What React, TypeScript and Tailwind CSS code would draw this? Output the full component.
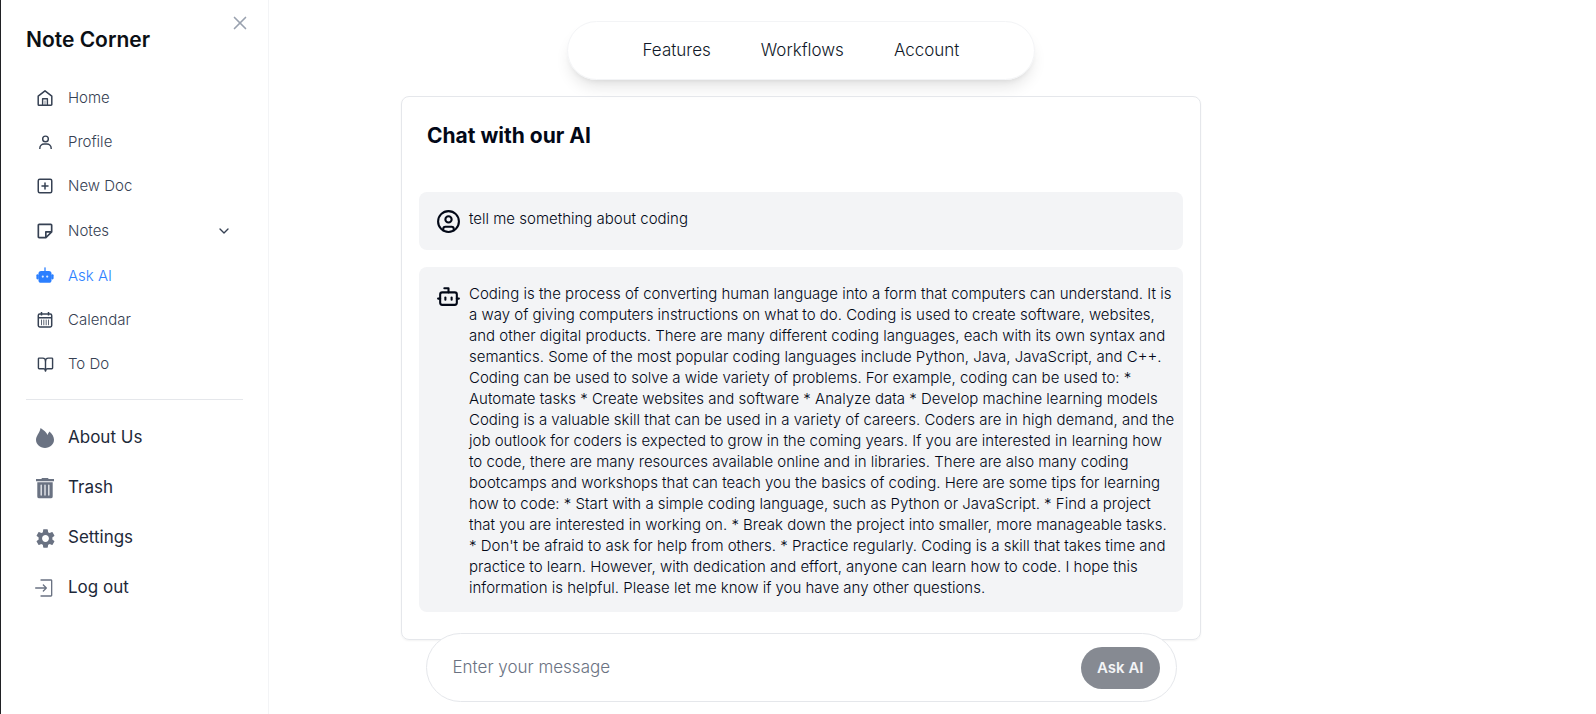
import type { ReactNode } from "react";
import { BiNote, BiUser } from "react-icons/bi";
import { LuBookOpen, LuBot, LuChevronDown, LuCircleUser, LuSquarePlus, LuX } from "react-icons/lu";
import { MdSettings } from "react-icons/md";
import { RxEnter } from "react-icons/rx";

function HomeIcon() {
  return (
    <svg viewBox="0 0 18 18" className="size-[18px]" fill="none" stroke="currentColor" strokeWidth="1.5" strokeLinejoin="round" aria-hidden="true">
      <path d="M2.2 7.2 9 1.8l6.8 5.4v8.2a.8.8 0 0 1-.8.8H3a.8.8 0 0 1-.8-.8z" />
      <path d="M6.6 16V9.8h4.8V16" strokeWidth="1.4" />
      <path d="M9 11.6V16" strokeWidth=".6" />
    </svg>
  );
}

function RobotIcon() {
  return (
    <svg viewBox="0 0 18 18" className="size-[18px]" aria-hidden="true">
      <path d="M9 .8v4" stroke="currentColor" strokeWidth="1.3" strokeLinecap="round" />
      <rect x="2.5" y="4" width="13" height="11.8" rx="2.6" fill="currentColor" />
      <rect x=".4" y="7.2" width="2.4" height="5.2" rx="1.1" fill="currentColor" />
      <rect x="15.2" y="7.2" width="2.4" height="5.2" rx="1.1" fill="currentColor" />
      <circle cx="6.8" cy="9.6" r="1.1" fill="#dbeafe" />
      <circle cx="11.2" cy="9.6" r="1.1" fill="#dbeafe" />
    </svg>
  );
}

function CalendarIcon() {
  return (
    <svg viewBox="0 0 18 18" className="size-[18px]" fill="none" stroke="currentColor" strokeWidth="1.5" aria-hidden="true">
      <rect x="2.3" y="3" width="13.4" height="13" rx="1.4" />
      <path d="M2.3 6.7h13.4M5.5 1v3.4M12.5 1v3.4" />
      <path d="M5.5 8.6v5.6M7.8 8.6v5.6M10.2 8.6v5.6M12.5 8.6v5.6" strokeWidth=".8" />
    </svg>
  );
}

function FlameIcon() {
  return (
    <svg viewBox="0 0 18 20" className="h-5 w-[18px]" fill="currentColor" aria-hidden="true">
      <path d="M4.6 0C8 2.2 10.2 4.4 11.6 6.9c.3-1.2.9-2.4 1.9-3.5C16.4 6 18 8.9 18 11.8 18 16.4 14 20 9 20s-9-3.6-9-8.2C0 7.900 3.600 5 4.600 0z" />
    </svg>
  );
}

function TrashIcon() {
  return (
    <svg viewBox="0 0 20 22" className="h-[22px] w-5" aria-hidden="true">
      <path d="M1 1.900h5.200l.9-1h5.800l.9 1H19v2.300H1zM2.300 5.200h15.400v14.200a1.900 1.900 0 0 1-1.900 1.900H4.200a1.900 1.900 0 0 1-1.900-1.900z" fill="currentColor" />
      <path d="M6.200 8.100v10M10 8.100v10M13.800 8.100v10" stroke="#e5e7eb" strokeWidth="1.4" strokeLinecap="round" />
    </svg>
  );
}

type Item = { label: string; icon: ReactNode; active?: boolean; expandable?: boolean };

const mainItems: Item[] = [
  { label: "Home", icon: <HomeIcon /> },
  { label: "Profile", icon: <BiUser size={17} /> },
  { label: "New Doc", icon: <LuSquarePlus size={18} /> },
  { label: "Notes", icon: <BiNote size={20} />, expandable: true },
  { label: "Ask AI", icon: <RobotIcon />, active: true },
  { label: "Calendar", icon: <CalendarIcon /> },
  { label: "To Do", icon: <LuBookOpen size={17} /> },
];

const moreItems: Item[] = [
  { label: "About Us", icon: <FlameIcon /> },
  { label: "Trash", icon: <TrashIcon /> },
  { label: "Settings", icon: <MdSettings size={23} className="shrink-0" /> },
  { label: "Log out", icon: <RxEnter size={20} /> },
];

const messages = [
  { from: "user", text: "tell me something about coding" },
  {
    from: "ai",
    text: "Coding is the process of converting human language into a form that computers can understand. It is a way of giving computers instructions on what to do. Coding is used to create software, websites, and other digital products. There are many different coding languages, each with its own syntax and semantics. Some of the most popular coding languages include Python, Java, JavaScript, and C++. Coding can be used to solve a wide variety of problems. For example, coding can be used to: * Automate tasks * Create websites and software * Analyze data * Develop machine learning models Coding is a valuable skill that can be used in a variety of careers. Coders are in high demand, and the job outlook for coders is expected to grow in the coming years. If you are interested in learning how to code, there are many resources available online and in libraries. There are also many coding bootcamps and workshops that can teach you the basics of coding. Here are some tips for learning how to code: * Start with a simple coding language, such as Python or JavaScript. * Find a project that you are interested in working on. * Break down the project into smaller, more manageable tasks. * Don't be afraid to ask for help from others. * Practice regularly. Coding is a skill that takes time and practice to learn. However, with dedication and effort, anyone can learn how to code. I hope this information is helpful. Please let me know if you have any other questions.",
  },
];

function Sidebar() {
  return (
    <aside className="flex w-[269px] shrink-0 flex-col border-l border-r border-l-[#202124] border-r-gray-100 pl-[25px] pr-[25px]">
      <div className="flex items-start justify-between">
        <h1 className="pt-[26px] text-[21px] font-semibold leading-7 text-[#0b0f14]">Note Corner</h1>
        <button type="button" aria-label="Close sidebar" className="-mr-2 mt-3 text-gray-400">
          <LuX size={22} strokeWidth={1.8} />
        </button>
      </div>
      <nav aria-label="Main" className="mt-[22px] border-b border-gray-200 pb-[13px]">
        <ul>
          {mainItems.map((item) => (
            <li key={item.label} className={item.expandable ? "py-px" : ""}>
              <a
                href="#"
                className={`flex h-11 items-center gap-[13px] pl-[9px] pr-[11px] text-[15px] font-light ${item.active ? "text-blue-500" : "text-gray-700"}`}
              >
                <span className="flex w-5 justify-center">{item.icon}</span>
                <span className="grow">{item.label}</span>
                {item.expandable && <LuChevronDown size={16} />}
              </a>
            </li>
          ))}
        </ul>
      </nav>
      <nav aria-label="More" className="pt-[13px]">
        <ul>
          {moreItems.map((item) => (
            <li key={item.label}>
              <a href="#" className="flex h-[50px] items-center gap-[13px] pl-[9px] text-[17px] text-gray-800">
                <span className="flex w-5 justify-center text-gray-500">{item.icon}</span>
                {item.label}
              </a>
            </li>
          ))}
        </ul>
      </nav>
    </aside>
  );
}

export default function App() {
  return (
    <div className="flex min-h-screen bg-white font-['Inter',sans-serif]">
      <Sidebar />
      <main className="flex min-w-0 grow flex-col items-center pr-[263px] pt-[21px]">
        <nav
          aria-label="Site"
          className="flex h-[59px] w-full max-w-[468px] items-center justify-center gap-[50px] rounded-full border border-gray-100 pt-px text-[17px] font-light text-gray-900 shadow-lg"
        >
          <a href="#">Features</a>
          <a href="#">Workflows</a>
          <a href="#">Account</a>
        </nav>
        <section className="mt-4 w-full max-w-[800px] rounded-lg border border-gray-200 px-[17px] pb-[27px] shadow-xs">
          <h2 className="px-2 py-[25px] text-[21px] font-bold leading-7 text-[#020817]">Chat with our AI</h2>
          <div className="mt-[17px] flex flex-col gap-[17px]">
            {messages.map((m) => (
              <div key={m.from} className="flex min-h-[58px] items-start gap-2 rounded-lg bg-gray-100 pb-[14px] pl-[17px] pr-2 pt-4 text-[#020817]">
                {m.from === "user" ? <LuCircleUser size={25} className="mt-px shrink-0" /> : <LuBot size={25} className="mt-px shrink-0" />}
                <p className="text-[15px] font-light leading-[21px]">{m.text}</p>
              </div>
            ))}
          </div>
        </section>
        <form
          onSubmit={(e) => e.preventDefault()}
          className="z-10 -mt-[7px] flex h-[69px] w-full max-w-[751px] items-center rounded-full border border-gray-200 bg-white pl-[26px] pr-4 pt-px"
        >
          <input
            type="text"
            aria-label="Message"
            placeholder="Enter your message"
            className="min-w-0 grow text-[17px] font-light outline-none placeholder:text-gray-500"
          />
          <button type="submit" className="h-[42px] rounded-full bg-[#868a92] px-4 text-[15px] font-semibold text-gray-100">
            Ask AI
          </button>
        </form>
      </main>
    </div>
  );
}
